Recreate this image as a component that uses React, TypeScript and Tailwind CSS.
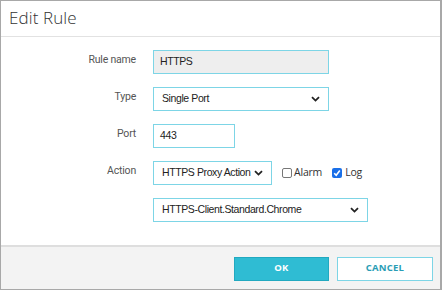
import React from 'react';

const valueFont = { fontFamily: '"Liberation Sans", Arial, sans-serif' };

function Chevron() {
  return (
    <svg width="9" height="6" viewBox="0 0 9 6" className="shrink-0">
      <path d="M1 1.2 L4.5 4.6 L8 1.2" fill="none" stroke="#222" strokeWidth="1.8" />
    </svg>
  );
}

function Select({ value, width }: { value: string; width: string }) {
  return (
    <div
      className={`${width} h-[24px] flex items-center justify-between pl-[8px] pr-[8px] border border-[#7dd5e6] bg-white text-[10.5px] tracking-[-0.4px] text-[#222] whitespace-nowrap`}
      style={valueFont}
    >
      <span>{value}</span>
      <Chevron />
    </div>
  );
}

function Label({ children }: { children: React.ReactNode }) {
  return (
    <div className="text-right text-[10.5px] tracking-[-0.2px] text-[#555] leading-[24px] -mt-[2px]" style={{ fontFamily: 'Roboto, sans-serif' }}>
      {children}
    </div>
  );
}

export default function App() {
  return (
    <div className="w-[442px] h-[290px] bg-white border-l border-t border-r-2 border-b border-[#a8a8a8] flex flex-col">
      {/* Header */}
      <div className="h-[36px] shrink-0 border-b border-[#e2e2e2] flex items-center pl-[8px]">
        <span className="text-[17px] font-light text-[#333] tracking-[0.1px] -mt-[1px]" style={{ fontFamily: '"Open Sans", Lato, sans-serif' }}>
          Edit Rule
        </span>
      </div>

      {/* Body */}
      <div className="flex-1 pt-[13px]">
        <div className="grid grid-cols-[135px_auto] gap-x-[17px] gap-y-[13px] items-start">
          <Label>Rule name</Label>
          <div
            className="w-[176px] h-[24px] flex items-center pl-[6px] border border-[#7dd5e6] bg-[#eeeeee] text-[10.5px] tracking-[-0.4px] text-[#222]"
            style={valueFont}
          >
            HTTPS
          </div>

          <Label>Type</Label>
          <Select value="Single Port" width="w-[176px]" />

          <Label>Port</Label>
          <div
            className="w-[82px] h-[24px] flex items-center pl-[6px] border border-[#7dd5e6] bg-white text-[10.5px] tracking-[-0.4px] text-[#222]"
            style={valueFont}
          >
            443
          </div>

          <Label>Action</Label>
          <div className="flex items-center">
            <Select value="HTTPS Proxy Action" width="w-[119px]" />
            <div className="flex items-center ml-[10px] text-[10.5px] tracking-[-0.2px] text-[#333]" style={{ fontFamily: '"Open Sans", sans-serif' }}>
              <span className="w-[10px] h-[10px] border border-[#777] rounded-[2px] bg-white mr-[2px]" />
              <span>Alarm</span>
              <span className="w-[10px] h-[10px] rounded-[2px] bg-[#1a6fe8] ml-[10px] mr-[3px] flex items-center justify-center">
                <svg width="8" height="8" viewBox="0 0 8 8">
                  <path d="M1.2 4.2 L3.2 6.2 L6.8 1.6" fill="none" stroke="#fff" strokeWidth="1.6" />
                </svg>
              </span>
              <span>Log</span>
            </div>
          </div>

          <div />
          <Select value="HTTPS-Client.Standard.Chrome" width="w-[215px]" />
        </div>
      </div>

      {/* Footer */}
      <div className="h-[44px] shrink-0 border-t-2 border-[#dedede] bg-[#f3f3f3] flex items-center justify-end gap-[8px] pr-[7px] pt-[1px]">
        <button
          className="w-[95px] h-[24px] bg-[#2fbcd3] border border-[#22a9c0] text-white text-[9.5px] font-bold tracking-[0.2px]"
          style={{ fontFamily: '"Open Sans", sans-serif' }}
        >
          OK
        </button>
        <button
          className="w-[96px] h-[24px] bg-white border border-[#7dd5e6] text-[#2a9db5] text-[9.5px] font-bold tracking-[0.2px]"
          style={{ fontFamily: '"Open Sans", sans-serif' }}
        >
          CANCEL
        </button>
      </div>
    </div>
  );
}
